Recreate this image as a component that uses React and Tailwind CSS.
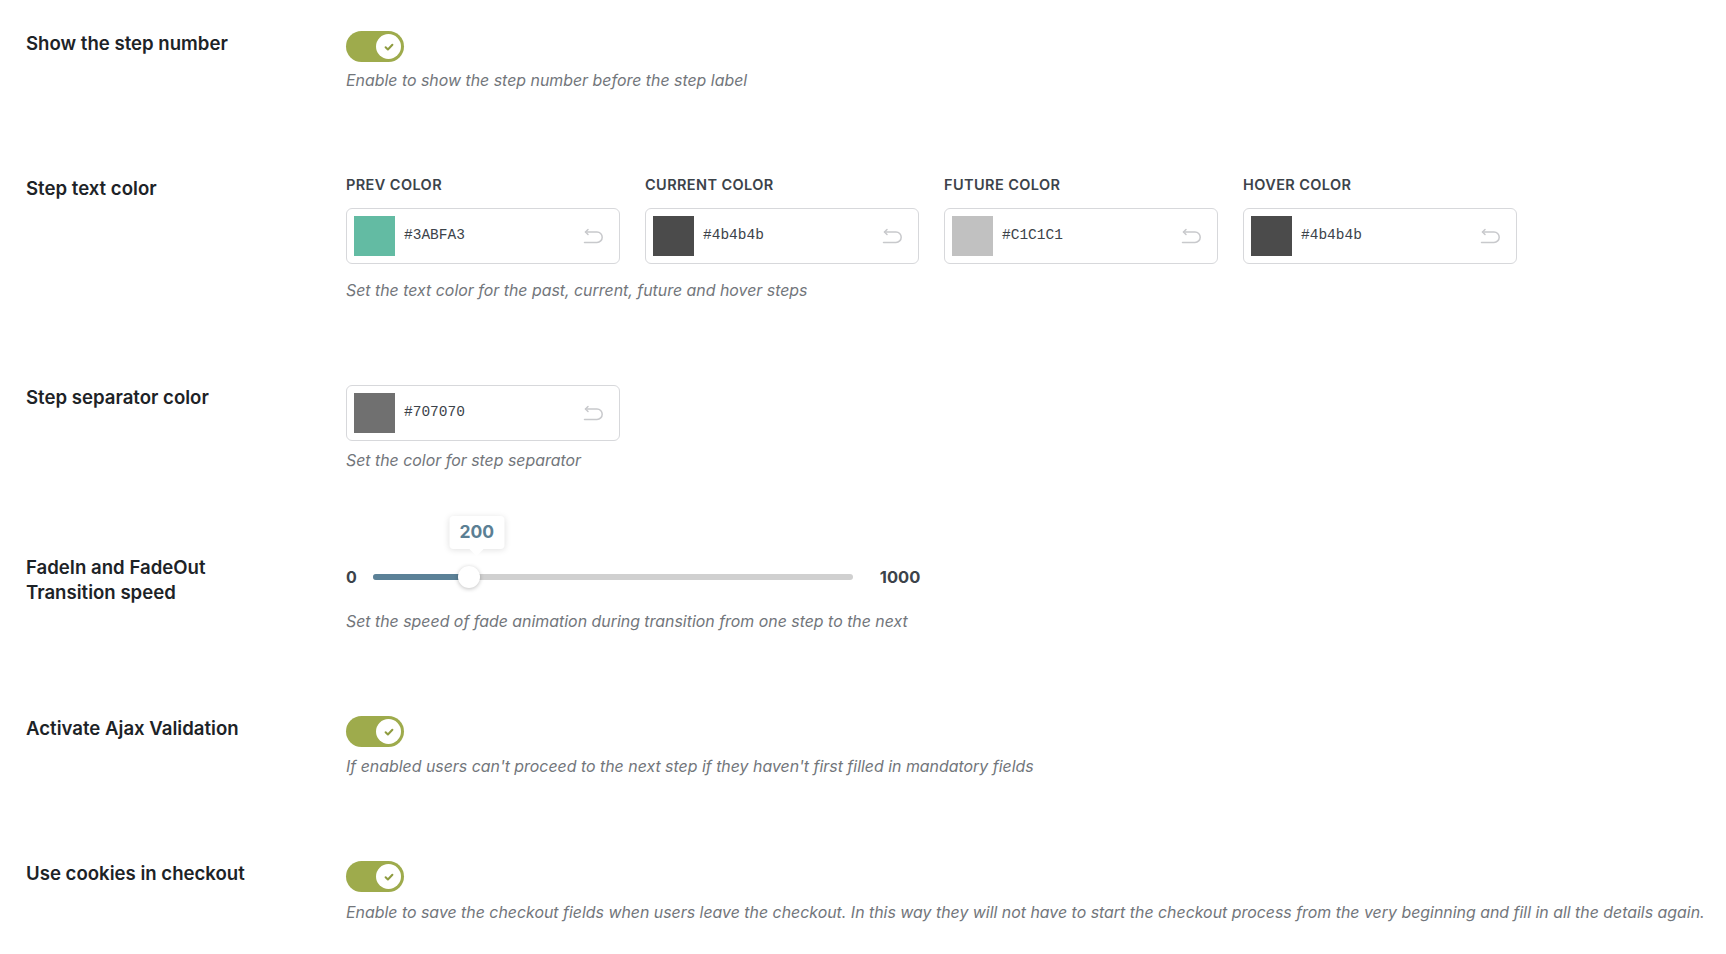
import React from 'react';

const colorFields = [
    { label: 'Prev color', value: '#3ABFA3', swatch: 'bg-[#63bba3]' },
    { label: 'Current color', value: '#4b4b4b', swatch: 'bg-[#4b4b4b]' },
    { label: 'Future color', value: '#C1C1C1', swatch: 'bg-[#c1c1c1]' },
    { label: 'Hover color', value: '#4b4b4b', swatch: 'bg-[#4b4b4b]' },
];

function Toggle() {
    return (
        <div className="flex h-[31px] w-[58px] items-center justify-end rounded-full bg-[#9eab4c] pr-[3px]">
            <div className="flex h-[25px] w-[25px] items-center justify-center rounded-full bg-white">
                <svg width="12" height="12" viewBox="0 0 12 12" fill="none">
                    <path d="M2.6 6.2l2.3 2.3 4.5-4.8" stroke="#8f9c40" strokeWidth="2" strokeLinecap="round" strokeLinejoin="round" />
                </svg>
            </div>
        </div>
    );
}

function ResetIcon() {
    return (
        <svg width="24" height="17" viewBox="0 0 24 17" fill="none" stroke="#c8c9cc" strokeWidth="1.5" strokeLinecap="round" strokeLinejoin="round">
            <path d="M4.5 4h11.5a5.2 5.2 0 0 1 0 10.4H3.5" />
            <path d="M7 1.5L4.5 4 7 6.5" />
        </svg>
    );
}

function ColorField({ value, swatch }) {
    return (
        <div className="flex h-[56px] w-[274px] items-center rounded-md border border-[#d7d8db] bg-white pl-[7px] pr-[14px]">
            <div className={`h-[40px] w-[41px] shrink-0 ${swatch}`} />
            <span className="ml-[9px] flex-1 font-['Liberation_Mono',monospace] text-[14.5px] font-medium text-[#3c434a]">{value}</span>
            <ResetIcon />
        </div>
    );
}

function Desc({ children, className = '' }) {
    return (
        <p className={`whitespace-nowrap text-[15.9px] italic leading-[22px] text-[#72767b] ${className}`}>{children}</p>
    );
}

function Row({ label, children, className = '' }) {
    return (
        <div className={`flex items-start ${className}`}>
            <div className="w-[346px] shrink-0 pl-[26px] text-[18.6px] font-semibold leading-[24px] text-[#1d2327]">
                {label}
            </div>
            <div className="flex flex-col items-start">{children}</div>
        </div>
    );
}

export default function App() {
    return (
        <div className="min-h-screen w-full bg-white pt-[31px] font-['Inter',sans-serif]">
            {/* Step number */}
            <Row label="Show the step number">
                <Toggle />
                <Desc className="mt-2">Enable to show the step number before the step label</Desc>
            </Row>

            {/* Step text colors */}
            <Row label={<span className="block pt-px">Step text color</span>} className="mt-[83px]">
                <div className="flex gap-[25px]">
                    {colorFields.map((f) => (
                        <div key={f.label} className="flex flex-col">
                            <span className="text-[14.5px] font-semibold uppercase leading-[20px] tracking-[0.4px] text-[#3c434a]">{f.label}</span>
                            <div className="mt-[13px]">
                                <ColorField value={f.value} swatch={f.swatch} />
                            </div>
                        </div>
                    ))}
                </div>
                <Desc className="mt-4">Set the text color for the past, current, future and hover steps</Desc>
            </Row>

            {/* Separator */}
            <Row label="Step separator color" className="mt-[83px]">
                <ColorField value="#707070" swatch="bg-[#707070]" />
                <Desc className="mt-[9px]">Set the color for step separator</Desc>
            </Row>

            {/* Fade speed */}
            <Row label={<span className="block leading-[25px]">FadeIn and FadeOut<br />Transition speed</span>} className="mt-[83px]">
                <div className="flex h-[44px] items-center">
                    <span className="text-[16px] font-bold text-[#3c434a]">0</span>
                    <div className="relative ml-[16px] h-[6px] w-[480px] rounded-full bg-[#d0d0d0]">
                        <div className="h-full w-[20%] rounded-full bg-[#5b8197]" />
                        <div className="absolute left-[20%] top-1/2 h-[22px] w-[22px] -translate-x-1/2 -translate-y-1/2 rounded-full bg-white shadow-[0_1px_4px_rgba(0,0,0,0.25)]" />
                        <div className="absolute bottom-[31px] left-[20%] flex h-[33px] w-[55px] -translate-x-[calc(50%-8px)] items-center justify-center rounded bg-white shadow-[0_1px_6px_rgba(0,0,0,0.12)]">
                            <span className="text-[17.5px] font-bold text-[#5b7f94]">200</span>
                            <div className="absolute -bottom-[5px] left-1/2 h-[10px] w-[10px] -translate-x-1/2 rotate-45 bg-white" />
                        </div>
                    </div>
                    <span className="ml-[27px] text-[16.5px] font-bold text-[#3c434a]">1000</span>
                </div>
                <Desc className="mt-3">Set the speed of fade animation during transition from one step to the next</Desc>
            </Row>

            {/* Ajax */}
            <Row label="Activate Ajax Validation" className="mt-[83px]">
                <Toggle />
                <Desc className="mt-[9px]">If enabled users can't proceed to the next step if they haven't first filled in mandatory fields</Desc>
            </Row>

            {/* Cookies */}
            <Row label="Use cookies in checkout" className="mt-[83px]">
                <Toggle />
                <Desc className="mt-[10px]">Enable to save the checkout fields when users leave the checkout. In this way they will not have to start the checkout process from the very beginning and fill in all the details again.</Desc>
            </Row>
        </div>
    );
}
